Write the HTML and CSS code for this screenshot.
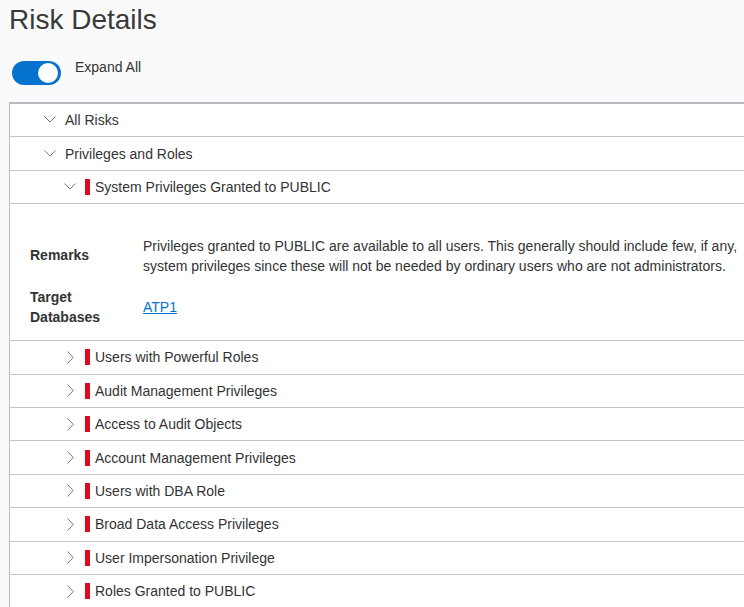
FILE: index.html
```html
<!DOCTYPE html>
<html>
<head>
<meta charset="utf-8">
<link rel="stylesheet" href="styles.css">
</head>
<body>
<div class="page">
  <h1 class="title">Risk Details</h1>
  <div class="toggle-row">
    <span class="switch"><span class="knob"></span></span>
    <span class="toggle-label">Expand All</span>
  </div>
  <div class="tree">
    <div class="row lvl0">
      <svg class="chev-down" width="12" height="7" viewBox="0 0 12 7"><path d="M0.5 0.5 L6 6 L11.5 0.5" fill="none" stroke="#7a7a7a" stroke-width="1"/></svg>
      <span class="txt">All Risks</span>
    </div>
    <div class="row lvl0">
      <svg class="chev-down" width="12" height="7" viewBox="0 0 12 7"><path d="M0.5 0.5 L6 6 L11.5 0.5" fill="none" stroke="#7a7a7a" stroke-width="1"/></svg>
      <span class="txt">Privileges and Roles</span>
    </div>
    <div class="row lvl2">
      <svg class="chev-down" width="12" height="7" viewBox="0 0 12 7"><path d="M0.5 0.5 L6 6 L11.5 0.5" fill="none" stroke="#7a7a7a" stroke-width="1"/></svg>
      <span class="bar"></span>
      <span class="txt">System Privileges Granted to PUBLIC</span>
    </div>
    <div class="details">
      <div class="label label-remarks">Remarks</div>
      <div class="value">Privileges granted to PUBLIC are available to all users. This generally should include few, if any, system privileges since these will not be needed by ordinary users who are not administrators.</div>
      <div class="label label-target">Target<br>Databases</div>
      <div class="value value-center"><a class="link" href="#">ATP1</a></div>
    </div>
    <div class="row lvl2">
      <span class="chev-box"><svg width="7" height="13" viewBox="0 0 7 13"><path d="M0.5 0.5 L6.3 6.5 L0.5 12.5" fill="none" stroke="#7a7a7a" stroke-width="1"/></svg></span>
      <span class="bar"></span>
      <span class="txt">Users with Powerful Roles</span>
    </div>
    <div class="row lvl2">
      <span class="chev-box"><svg width="7" height="13" viewBox="0 0 7 13"><path d="M0.5 0.5 L6.3 6.5 L0.5 12.5" fill="none" stroke="#7a7a7a" stroke-width="1"/></svg></span>
      <span class="bar"></span>
      <span class="txt">Audit Management Privileges</span>
    </div>
    <div class="row lvl2">
      <span class="chev-box"><svg width="7" height="13" viewBox="0 0 7 13"><path d="M0.5 0.5 L6.3 6.5 L0.5 12.5" fill="none" stroke="#7a7a7a" stroke-width="1"/></svg></span>
      <span class="bar"></span>
      <span class="txt">Access to Audit Objects</span>
    </div>
    <div class="row lvl2">
      <span class="chev-box"><svg width="7" height="13" viewBox="0 0 7 13"><path d="M0.5 0.5 L6.3 6.5 L0.5 12.5" fill="none" stroke="#7a7a7a" stroke-width="1"/></svg></span>
      <span class="bar"></span>
      <span class="txt">Account Management Privileges</span>
    </div>
    <div class="row lvl2">
      <span class="chev-box"><svg width="7" height="13" viewBox="0 0 7 13"><path d="M0.5 0.5 L6.3 6.5 L0.5 12.5" fill="none" stroke="#7a7a7a" stroke-width="1"/></svg></span>
      <span class="bar"></span>
      <span class="txt">Users with DBA Role</span>
    </div>
    <div class="row lvl2">
      <span class="chev-box"><svg width="7" height="13" viewBox="0 0 7 13"><path d="M0.5 0.5 L6.3 6.5 L0.5 12.5" fill="none" stroke="#7a7a7a" stroke-width="1"/></svg></span>
      <span class="bar"></span>
      <span class="txt">Broad Data Access Privileges</span>
    </div>
    <div class="row lvl2">
      <span class="chev-box"><svg width="7" height="13" viewBox="0 0 7 13"><path d="M0.5 0.5 L6.3 6.5 L0.5 12.5" fill="none" stroke="#7a7a7a" stroke-width="1"/></svg></span>
      <span class="bar"></span>
      <span class="txt">User Impersonation Privilege</span>
    </div>
    <div class="row lvl2">
      <span class="chev-box"><svg width="7" height="13" viewBox="0 0 7 13"><path d="M0.5 0.5 L6.3 6.5 L0.5 12.5" fill="none" stroke="#7a7a7a" stroke-width="1"/></svg></span>
      <span class="bar"></span>
      <span class="txt">Roles Granted to PUBLIC</span>
    </div>
  </div>
</div>
</body>
</html>
```
FILE: styles.css
```css
html, body {
  margin: 0;
  padding: 0;
  background: #fafafa;
  font-family: "Liberation Sans", Arial, sans-serif;
  color: #333333;
  overflow: hidden;
}
.page {
  padding-left: 9px;
}
.title {
  margin: 0;
  padding-top: 4px;
  font-size: 28px;
  line-height: 32px;
  font-weight: normal;
  color: #3a3a3a;
}
.toggle-row {
  display: flex;
  align-items: flex-start;
  margin-top: 21px;
  padding-left: 3px;
  gap: 14px;
}
.switch {
  position: relative;
  display: block;
  width: 49px;
  height: 24px;
  margin-top: 4px;
  border-radius: 12px;
  background: #0572ce;
}
.knob {
  position: absolute;
  right: 3px;
  top: 2px;
  width: 20px;
  height: 20px;
  border-radius: 50%;
  background: #ffffff;
}
.toggle-label {
  font-size: 14px;
  line-height: 20px;
}
.tree {
  margin-top: 17px;
  background: #ffffff;
  border-top: 2px solid #b7bbc1;
  border-left: 1px solid #b7bbc1;
}
.row {
  display: flex;
  align-items: center;
  box-sizing: border-box;
  height: 33.4px;
  border-bottom: 1px solid #c2c6cb;
  font-size: 14px;
}
.lvl0 {
  padding-left: 34px;
}
.lvl2 {
  padding-left: 54px;
}
.chev-down {
  display: block;
  flex: none;
  margin-top: -1px;
}
.chev-box {
  display: flex;
  justify-content: center;
  width: 12px;
  flex: none;
}
.chev-box svg {
  display: block;
}
.txt {
  margin-left: 9px;
  white-space: nowrap;
}
.bar {
  display: block;
  flex: none;
  width: 5px;
  height: 16px;
  margin-left: 9px;
  background: #de0a1f;
}
.bar + .txt {
  margin-left: 5px;
}
.details {
  display: grid;
  grid-template-columns: 113px 1fr;
  row-gap: 11px;
  box-sizing: border-box;
  height: 137px;
  padding: 32px 0 13px 20px;
  border-bottom: 1px solid #c2c6cb;
  font-size: 14px;
  line-height: 20px;
}
.label {
  font-weight: bold;
}
.label-remarks {
  padding-top: 9px;
}
.value {
  padding-right: 4px;
}
.value-center {
  align-self: center;
}
.link {
  color: #0572ce;
  text-decoration: underline;
}
```
